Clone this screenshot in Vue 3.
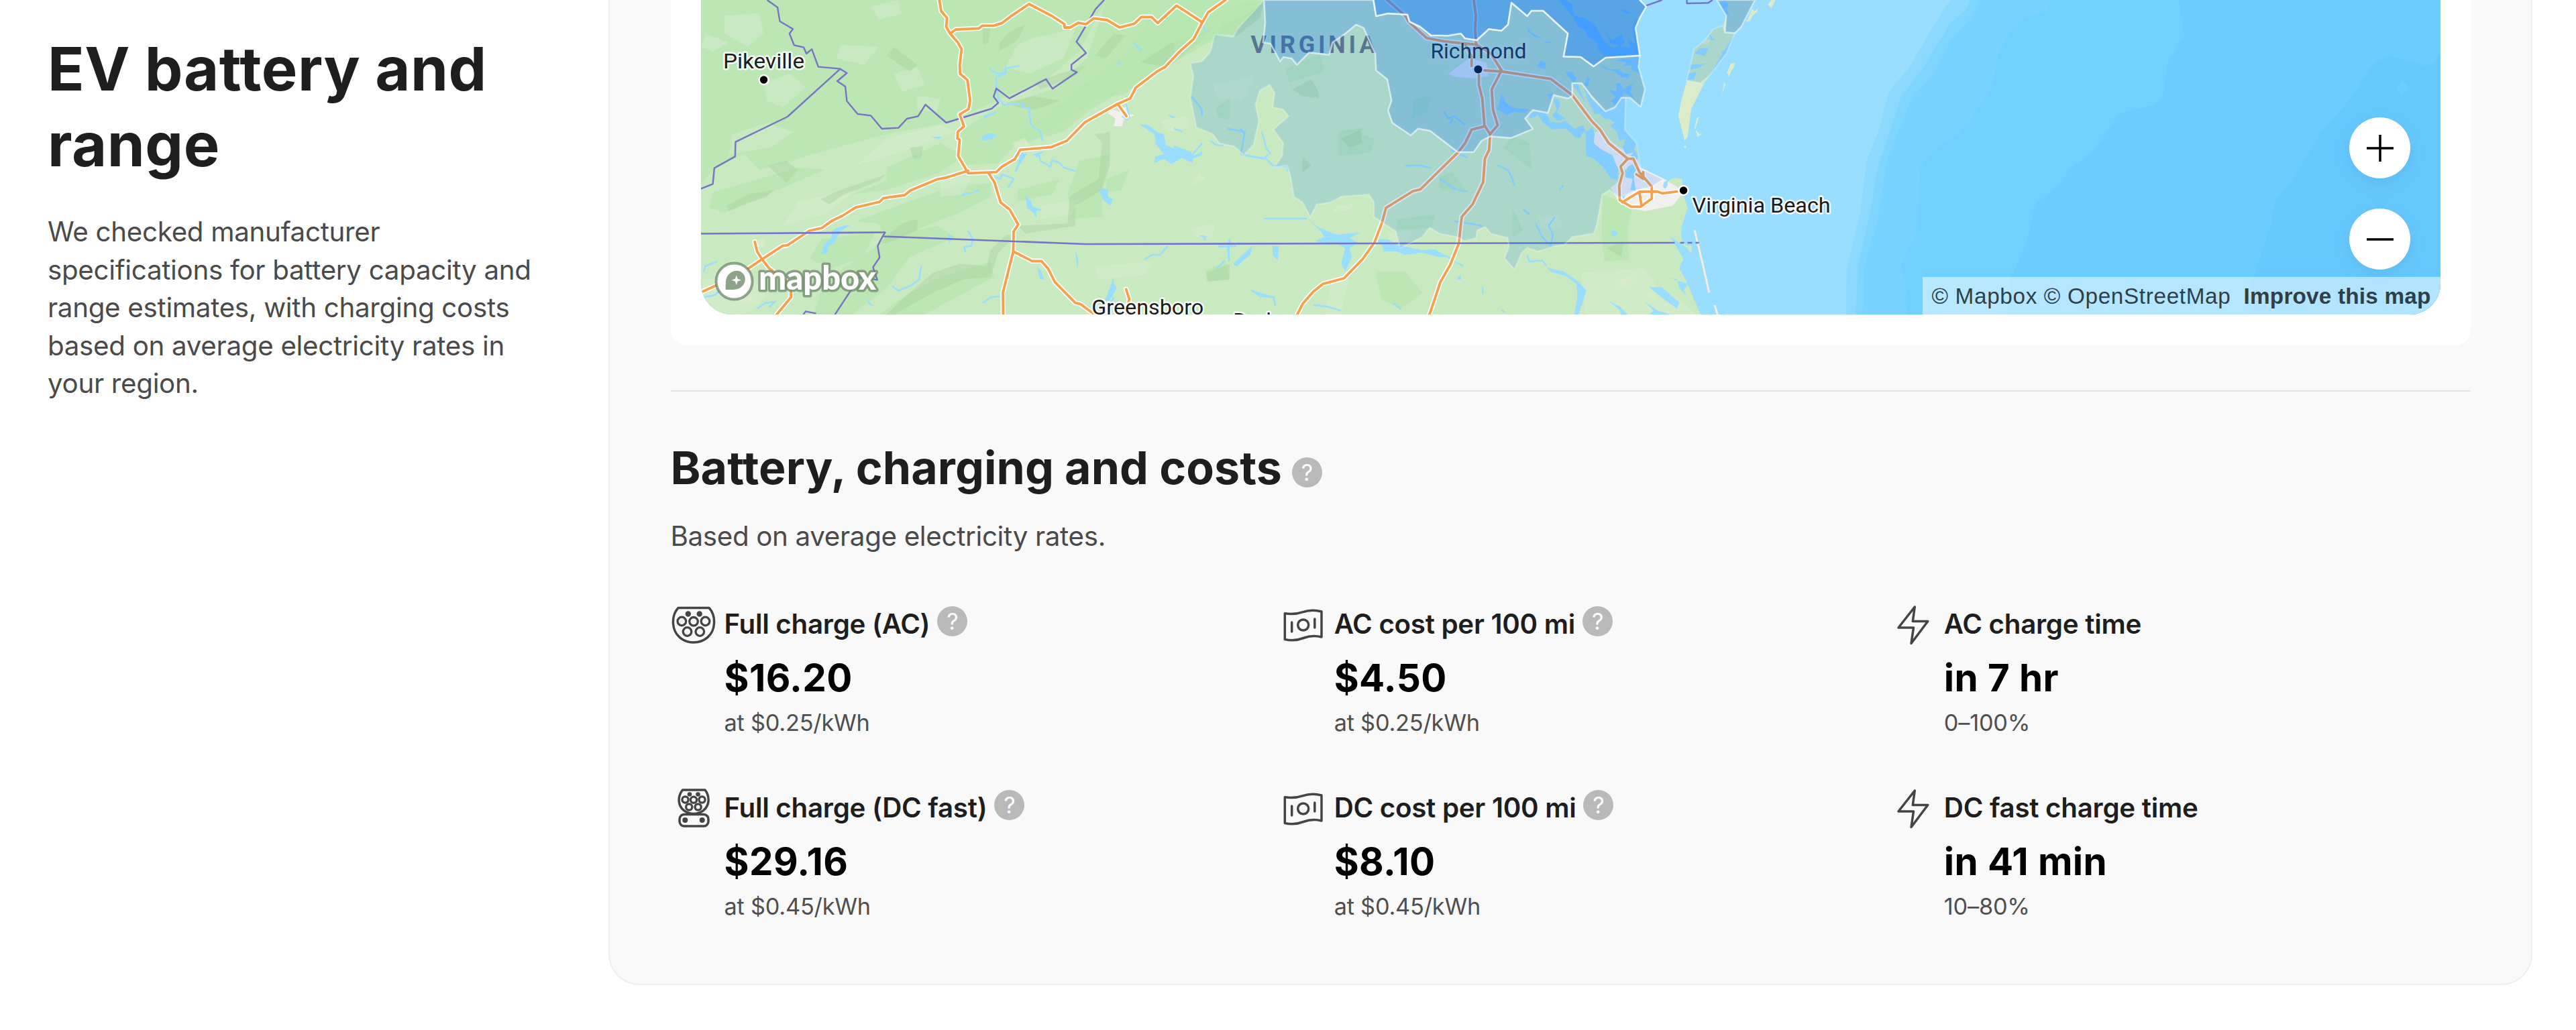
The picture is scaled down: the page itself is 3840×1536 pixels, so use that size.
<script setup>
const stats = [
    { icon: 'ac', label: 'Full charge (AC)', value: '$16.20', note: 'at $0.25/kWh', help: true },
    { icon: 'cash', label: 'AC cost per 100 mi', value: '$4.50', note: 'at $0.25/kWh', help: true },
    { icon: 'bolt', label: 'AC charge time', value: 'in 7 hr', note: '0–100%', help: false },
    { icon: 'dc', label: 'Full charge (DC fast)', value: '$29.16', note: 'at $0.45/kWh', help: true },
    { icon: 'cash', label: 'DC cost per 100 mi', value: '$8.10', note: 'at $0.45/kWh', help: true },
    { icon: 'bolt', label: 'DC fast charge time', value: 'in 41 min', note: '10–80%', help: false },
];

// ocean depth bands, shallow to deep
const depths = [
    { fill: '#8bd9ff', d: 'M285 0 270 35 200 255 160 340 150 400 140 480 113 605 100 800 72 1010 70 1190H1300V0Z' },
    { fill: '#80d5ff', d: 'M325 0 315 40 285 85 225 265 183 365 135 640 120 800 95 1000 90 1190H1300V0Z' },
    { fill: '#78d2ff', d: 'M345 0 325 70 285 150 250 280 205 370 155 600 135 830 108 1000 104 1190H1300V0Z' },
    { fill: '#70d0ff', d: 'M488 0 485 35 430 75 412 110 383 200 372 310 357 370 300 510 250 570 222 635 218 870 183 1000 196 1110 195 1190H1300V0Z' },
    { fill: '#6bccff', d: 'M752 0 764 135 730 235 718 375 700 397 632 427 578 572 530 635 510 695 458 770 440 920 405 1060 400 1190H1300V0Z' },
    { fill: '#65c9ff', d: 'M1289 200 1275 240 1255 247 1190 213 1165 225 1148 245 1108 365 1045 495 990 665 948 765 942 840 905 1050 890 1190H1300V200Z' },
    { fill: '#6bccff', d: 'M1210 302 1225 330 1210 360 1198 335Z' },
];

const westForest = [
    'M70 0H1130L1060 230 980 350 860 440 720 550 560 600 430 660 310 720 230 760 190 690 120 740 70 840Z',
    'M1130 0H1440L1390 170 1300 280 1180 400 1080 500 1020 590 900 640 850 730 760 740 740 600 850 480 990 400 1080 260Z',
    'M1250 70 1540 0 1530 60 1460 130 1360 200 1300 290 1220 360 1180 420 1110 440 1010 560 930 640 900 610 1000 480 1110 330 1190 220Z',
    'M560 750 700 640 760 700 700 770 560 850 470 870 560 810Z',
    'M110 860 230 800 330 750 400 760 330 810 250 870 140 950 100 930Z',
    'M480 990 620 900 740 830 830 820 830 880 740 960 690 990 560 1090 540 1000Z',
    'M560 1060 690 1010 740 1060 620 1150 560 1290 470 1407H370L400 1250 520 1120Z',
    'M1060 720 1140 690 1120 830 1120 970 1040 980 1030 870Z',
    'M1130 800 1190 760 1170 850 1130 860Z',
    'M700 1240 830 1170 840 1240 740 1330 660 1407H540L620 1310Z',
    'M900 850 1010 800 990 870 900 900Z',
    'M390 1070 530 1040 500 1150 420 1200 360 1160Z',
    'M1390 1210 1440 1170 1450 1250 1390 1260Z',
];

const westClearings = [
    'M140 70 230 60 240 150 200 210 140 150Z',
    'M240 370 310 330 350 390 290 480 250 450Z',
    'M520 30 590 0 600 60 540 90Z',
    'M940 170 1050 130 1020 260 930 330 870 300 900 200Z',
    'M440 200 540 210 500 290 430 260Z',
    'M580 330 640 300 660 380 600 410Z',
    'M160 600 250 550 320 590 260 660 150 690Z',
    'M640 430 700 440 690 500 640 490Z',
    'M90 150 150 190 110 230 80 210Z',
    'M560 620 700 560 740 590 600 680 480 740Z',
    'M700 800 780 790 760 870 700 880Z',
    'M80 1250 210 1230 250 1330 190 1407H130L80 1330Z',
    'M1370 770 1390 800 1350 830Z',
    'M1270 540 1340 520 1350 570 1290 590Z',
    'M330 900 480 850 400 960 290 1010Z',
    'M960 920 1060 890 1040 960 960 980Z',
    'M1100 1190 1250 1170 1230 1230 1110 1250Z',
];

const ridges = [
    'M145 920 200 870 265 850 250 880 200 910 150 945Z',
    'M390 890 440 850 560 780 540 810 450 870 410 915Z',
    'M620 660 655 655 650 710 630 710Z',
    'M855 190 880 140 920 110 900 180 850 230Z',
    'M810 120 830 110 825 190 810 200Z',
    'M945 370 1010 330 1080 290 1050 340 960 400Z',
    'M870 460 940 430 1010 450 950 490 900 480Z',
    'M1100 600 1140 590 1140 740 1120 850 1050 920 1050 1010 920 1045 900 1010 1030 1000 1035 880 1110 800 1120 640Z',
    'M680 1220 750 1180 820 1190 830 1120 870 1050 900 1050 850 1130 830 1240 760 1250 680 1310 580 1407H560L600 1340Z',
    'M600 1000 640 980 640 1030 560 1090 545 1080Z',
    'M1220 280 1290 200 1360 160 1420 100 1360 210 1290 300Z',
    'M580 210 640 290 620 320 560 250Z',
    'M250 740 300 720 330 760 300 820 270 770Z',
    'M1100 250 1150 150 1180 160 1130 260Z',
    'M1430 110 1500 60 1540 0 1530 80 1470 160 1420 150Z',
];

const westLakes = [
    'M1215 555 1240 560 1262 590 1280 600 1285 650 1310 665 1335 690 1325 700 1355 715 1355 730 1325 705 1300 735 1280 710 1255 730 1258 700 1280 690 1260 645 1255 600Z',
    'M1345 680 1360 695 1380 675 1378 695 1350 712Z',
    'M390 1138 398 1090 415 1070 420 1030 445 1010 465 1008 440 1035 425 1085 410 1100 405 1130Z',
    'M808 610 830 595 848 605 830 625 808 628Z',
    'M675 613 705 612 695 622Z',
    'M810 520 845 498 840 510 815 528Z',
    'M750 880 762 860 780 862 800 848 800 858 765 872Z',
    'M920 870 935 900 940 925 965 938 948 945 950 975 940 950 925 930Z',
    'M1120 840 1135 850 1135 880 1148 890 1140 920 1125 900 1112 855Z',
    'M1140 1285 1150 1240 1150 1270 1158 1290 1140 1345 1127 1345Z',
    'M1510 1100 1502 1140 1470 1190 1460 1185 1485 1140 1495 1130Z',
    'M1050 1115 1058 1165 1055 1205Z',
    'M1255 640 1262 640 1260 650Z',
    'M905 680 925 690 912 720 895 770 905 710Z',
    'M940 690 970 675 950 705Z',
    'M720 1045 722 1090 732 1060Z',
    'M950 1190 960 1210 970 1252 958 1248Z',
    'M508 1335 525 1368 515 1365Z',
    'M1290 510 1312 525 1300 528Z',
];

const westStreams = [
    'M828 305 845 330 870 325 868 305 905 295',
    'M870 328 845 345 845 395 850 440 865 470 880 465 915 465 915 480 930 485 935 560 960 590 965 630',
    'M955 690 960 720 985 745 990 715 1010 730 1020 750 1050 765',
    'M840 790 855 800 860 780 890 800 875 840',
    'M905 720 895 770',
    'M85 1215 90 1190 120 1170M85 1330 115 1320 125 1300',
    'M770 1030 785 1070 780 1100 762 1105 765 1130',
    'M575 1280 590 1300 620 1280 645 1250 650 1190',
    'M1230 1160 1250 1140 1270 1140 1290 1100',
    'M225 1380 245 1355 270 1350 255 1375',
    'M810 1355 830 1330 855 1325',
    'M1140 1365 1150 1330M1380 1055 1388 1075',
    'M1510 1300 1530 1325 1568 1330',
    'M1485 690 1505 700 1540 710 1550 690',
    'M1445 575 1490 590 1480 690M1355 690 1380 640',
    'M1420 1105 1455 1100 1450 1070M1445 1100 1450 1165',
    'M1200 190 1220 225M1160 290 1168 280',
    'M1172 520 1185 535 1190 520 1182 465',
];

const eastForest = [
    'M0 0H200L150 130 60 210 0 280Z',
    'M1000 870 1040 900 1070 940 1060 1010 1062 1160 1005 1170 1000 1070Z',
    'M470 1215 540 1215 580 1310 530 1380 485 1340Z',
    'M385 590 440 570 440 605 470 620 460 680 385 700Z',
    'M620 790 650 770 680 850 620 850Z',
    'M790 610 830 640 835 760 770 660Z',
    'M520 980 610 960 600 1020 520 1025Z',
    'M260 310 340 240 350 320 270 370Z',
    'M790 930 815 1030 790 1060Z',
    'M100 480 130 440 130 540 100 520Z',
    'M560 440 600 430 590 500 555 530Z',
];

const eastClearings = [
    'M90 380 190 340 160 450 100 440Z',
    'M40 1020 95 1000 90 1070 50 1060Z',
    'M380 920 420 910 410 940 370 950Z',
    'M370 1250 410 1240 390 1407H350Z',
    'M950 1220 1100 1200 1130 1290 1190 1350 1220 1407H960Z',
    'M850 970 900 960 910 1010 860 1025Z',
    'M500 1040 560 1030 540 1100 500 1110Z',
];

const eastLakes = [
    'M765 420 775 460 790 480 830 490 820 505 790 500 780 515 755 490Z',
    // lake gaston and kerr
    'M312 975 335 1015 365 1040 380 1050 435 1040 410 1065 430 1085 410 1110 415 1150 400 1215 390 1180 400 1110 380 1090 350 1095 330 1080 350 1060 345 1040Z',
    'M470 1070 500 1070 520 1095 580 1120 610 1115 630 1140 645 1150 620 1150 580 1130 540 1140 520 1125 490 1125 485 1095Z',
    'M230 1100 245 1100 242 1165 230 1140Z',
    'M183 1100 178 1140 145 1190 138 1180 160 1140Z',
    'M870 1197 910 1215 945 1260 963 1300 955 1350 945 1407H935L942 1330 940 1270 915 1235 880 1215Z',
    'M1110 1285 1140 1285 1160 1320 1180 1350 1175 1380 1145 1340Z',
    'M1160 1060 1200 1110 1210 1150 1200 1200 1215 1260 1240 1320 1250 1407H1230L1215 1340 1195 1250 1180 1200 1190 1160Z',
    'M1150 1240 1175 1250 1180 1290 1200 1330 1190 1300 1200 1270Z',
    'M1015 1345 1040 1370 1060 1407H1045L1040 1385Z',
    'M1100 1350 1130 1390 1160 1407H1110L1120 1390Z',
    'M0 650 40 680 45 720 20 705 0 725Z',
    'M1020 1035 1030 1030 1037 1050 1025 1060Z',
    'M668 1230 672 1250 660 1250Z',
];

// tidal rivers on the bay side
const tidewater = [
    'M370 0H400L425 15 440 70 490 80 530 110 550 145 580 195 610 215 640 205 690 215 680 175 710 200 700 120 715 80 730 150 735 248 580 257 545 220 540 190 500 165 480 130 455 120 435 75 415 55Z',
    'M580 140 605 180 650 155 665 190 640 205 600 195Z',
    'M630 35 690 55 680 65Z',
    'M270 505 310 500 335 545 370 550 400 540 440 575 480 560 490 590 520 570 530 600 525 640 555 665 610 695 635 760 630 805 605 800 560 740 520 705 492 700 490 600 480 590 465 618 445 615 400 575 340 578 300 550Z',
    'M235 510 280 495 270 520 240 530Z',
    'M345 440 370 445 375 475 360 500 400 530 365 540 340 520 360 490Z',
    'M428 374 455 375 480 440 490 460 445 400Z',
    'M475 375 520 450 575 498 620 480 650 440 667 440 665 580 715 645 705 670 725 700 715 720 690 700 705 680 670 690 655 660 670 620 640 630 630 590 600 560 620 550 590 530 570 530 555 510 530 510 500 450Z',
    'M545 285 600 310 640 310 660 330 690 330 680 350 650 345 620 320 580 310Z',
    'M620 270 735 252 722 300 740 345 715 320 690 310 700 295 660 295 670 280Z',
    'M590 400 630 410 625 375 645 370 655 400 700 375 690 410 705 440 660 415 650 440 625 480 605 450 625 435Z',
    'M400 320 425 320 450 350 435 370 405 335Z',
    'M500 340 508 350 500 385 480 385Z',
    'M275 290 290 270 310 280 310 310 275 300Z',
    'M230 120 245 145 295 172 260 165 230 140ZM300 188 335 185 330 195Z',
    'M315 425 345 415 330 445 325 435Z',
    'M665 770 680 745 700 735 715 750 705 800 715 855 690 850 700 800 670 795Z',
    'M840 815 860 805 855 830 845 845 835 835Z',
    'M650 880 670 870 660 890Z',
    'M1110 0 1130 20 1120 45 1135 70 1115 65 1085 10Z',
    'M950 290 1025 285 990 305 960 310ZM1040 150 1070 180 1050 180ZM1000 215 1040 215 1020 250 975 240ZM945 330 985 320 975 355 945 358ZM1095 235 1118 220 1105 245Z',
];

const eastStreams = [
    'M540 742 575 740 600 752M645 670 685 705',
    'M620 800 660 850M665 852 685 855',
    'M755 740 780 760 790 800 795 830',
    'M815 935 830 960M845 1000 860 1060 880 1100 885 1050 875 1010 890 970',
    'M180 1300 210 1320 232 1330 237 1370',
    'M325 1365 355 1370 390 1390',
    'M720 1285 722 1315M512 1355 530 1385',
    'M825 1140 830 1170 860 1165 870 1190',
    'M210 978 310 978',
    'M128 1070 128 1170M105 1105 145 1100',
    'M100 1200 118 1165M60 1055 75 1060',
    'M630 500 640 530 655 520 680 560M650 530 645 555',
    'M0 575 20 590M40 430 65 490 65 520',
    'M85 630 100 650 115 650M155 575 165 600M205 590 215 660 225 690',
    'M155 690 215 710 230 740 265 745 265 770',
    'M655 990 690 1000 720 1010M765 1385 770 1395',
    'M910 830 900 850',
    'M65 100 75 145',
    'M655 1170 675 1190M640 1150 650 1165',
];

const westRoads = [
    'M697 0 702 50 717 80 715 120 725 150 745 190 755 220 750 290 751 330 770 358 777 450 773 488 750 512 761 565 745 590 744 620 750 625 746 698 772 775 845 770 860 745 893 712 907 670 988 658 1028 630 1075 547 1160 465 1193 440 1207 392 1262 320 1283 300 1320 232 1357 175 1380 100 1395 55 1440 0',
    'M725 150 740 132 800 127 808 115 838 115 860 103 885 70 930 18 990 72 1022 108 1022 123 1037 123 1058 102 1078 108 1098 82 1133 90 1165 123 1203 106 1222 76 1248 76 1264 103 1313 25 1380 100',
    'M78 1308 170 1237 237 1160 290 1100 303 1097 360 1032 392 1020 418 988 445 966 480 928 542 903 552 886 607 873 622 852 690 803 716 794 772 764',
    'M825 775 840 815 856 905 880 938 902 1005 890 1035 889 1125 862 1310 863 1410',
    'M889 1125 938 1168 962 1168 980 1203 997 1262 1050 1355 1063 1360 1100 1407',
    'M218 1082 224 1125 237 1160 255 1200 298 1255 312 1290 312 1330 275 1407',
    'M1160 465 1183 520',
    'M1182 1294 1190 1337 1183 1407',
];

const eastRoads = [
    'M498 0 540 70 548 97 590 170 630 185 680 195 707 200 740 240 765 315',
    'M700 0 705 70 703 130 706 205',
    'M680 200 695 250 695 295M725 315 765 320 880 353 930 425 975 540 995 580 1015 640 1060 710 1043 745 1048 775 1040 830 1041 895 1068 925 1090 925 1116 888 1116 835 1087 770 1073 710 1060 710',
    'M765 315 742 400 745 490 756 560 738 600 725 560 720 440 712 380 712 335',
    'M725 565 695 580 680 640 663 682 575 848 558 855 495 930 485 1000 468 1085 440 1160 397 1245 348 1270 325 1305 300 1360 287 1410',
    'M738 605 736 670 726 710 722 815 697 915 672 970 665 1090 645 1185 622 1262 612 1320 596 1410',
    'M1047 905 1087 858 1130 857 1140 865 1175 857M1087 860 1092 920M1080 780 1096 800 1096 770',
];

const borders = [
    { from: 'west', d: 'M250 0 277 33 283 95 317 130 308 150 320 202 345 212 352 240 366 220 383 299 440 308 303 522 168 635 167 700 113 752 109 823 70 850' },
    { from: 'west', d: 'M440 308 457 327 432 363 453 387 457 452 485 510 519 517 548 576 591 572 613 531 642 520 661 468 715 549 833 486 850 460 838 432 845 396 879 440 974 354 991 397 1054 323 1040 312 1040 290 1078 237 1053 187 1103 40 1125 0' },
    { from: 'west', d: 'M557 1038 550 1057 537 1100 542 1152 525 1195 536 1252 490 1240 425 1410M343 1410 350 1393 377 1402' },
    { from: 'east', d: 'M1103 25 1140 0M1198 0 1198 15 1248 13 1258 0' },
];

const lightZones = [
    'M210 0 150 125 138 165 95 155 85 230 65 275 38 283 45 340 38 440 52 570 90 600 105 640 140 655 163 693 185 650 198 540 190 470 200 405 223 380 235 415 230 480 255 490 267 520 232 580 255 640 252 700 235 745 265 740 272 790 280 880 300 905 318 970 333 915 365 905 390 880 455 870 467 905 467 970 490 1000 518 1035 528 1110 580 1060 597 1018 620 1045 660 1060 680 1078 705 1065 708 1030 727 1015 740 1045 780 1065 782 1105 772 1155 795 1205 812 1130 825 1108 850 1125 890 1100 912 1095 930 1060 980 1045 988 1000 1000 870 1018 850 1040 885 1080 850 1116 835 1142 802 1090 755 1080 640 1053 580 1055 437 1045 437 1030 480 1008 498 975 430 952 372 930 372 930 430 920 440 887 425 873 505 838 492 820 530 838 577 787 617 738 610 718 630 700 680 663 680 598 585 570 575 553 605 510 550 500 495 508 450 498 355 472 315 470 240 443 125 425 110 400 150 370 190 362 245 315 235 287 290 275 262 255 255 248 275 225 195 208 190 213 100Z',
    'M1282 115 1260 130 1240 180 1215 220 1198 360 1230 372 1250 340 1290 240 1310 148 1287 145Z',
];

const darkZones = [
    'M210 0 213 100 208 190 225 195 248 275 255 255 275 262 287 290 315 235 362 245 370 190 400 150 425 110 443 125 470 240 472 315 498 355 508 450 500 495 510 550 553 605 570 575 598 585 663 680 700 680 718 630 738 610 787 617 838 577 820 530 838 492 873 505 887 425 920 440 930 430 930 372 952 372 975 430 1008 498 1030 480 1045 437 1065 437 1090 478 1100 400 1085 300 1088 248 1008 258 980 297 950 255 910 253 920 150 862 48 835 48 825 72 788 12 780 110 765 137 735 130 707 180 680 172 670 150 600 158 575 120 550 97 545 65 500 60 472 72 465 0Z',
    'M1268 0 1290 70 1287 145 1310 148 1325 120 1357 0Z',
];

const blueZone = 'M465 -10 472 72 500 60 545 65 550 97 575 120 600 158 640 160 670 150 680 172 707 180 735 130 765 137 780 110 788 12 825 72 835 48 862 48 920 150 910 253 950 255 980 297 1008 258 1088 248 1078 125 1088 80 1103 30 1083 -10Z';

const islets = [
    'M1198 360 1185 450 1178 520 1193 630 1200 610 1208 490 1238 375Z',
    'M1190 660 1194 650 1198 662Z',
    'M1340 90 1350 40 1356 50 1345 95Z',
    'M1395 0 1405 0 1395 38 1388 20Z',
    'M1300 285 1310 280 1296 345 1292 325Z',
    'M1285 370 1288 375 1280 425Z',
    'M1215 580 1222 525 1226 525 1218 575Z',
];
</script>

<template>
    <div class="page">
        <aside class="intro">
            <h1>EV battery and range</h1>
            <p>We checked manufacturer specifications for battery capacity and range estimates, with charging costs based on average electricity rates in your region.</p>
        </aside>

        <main class="panel">
            <section class="map-card">
                <div class="map">
                    <svg class="map-canvas" viewBox="1045 0 2592 469" preserveAspectRatio="none">
                        <rect x="1045" width="2592" height="469" fill="#99ddff" />
                        <g transform="translate(2700 0) scale(.72707 .39542)">
                            <path v-for="band in depths" :key="band.d" :d="band.d" :fill="band.fill" />
                        </g>
                        <g transform="translate(1750 0) scale(.63776 .33333)">
                            <path class="land" d="M-1150 0H1083L1103 30 1088 80 1078 125 1088 250 1085 300 1100 400 1090 478 1065 437 1055 437 1053 580 1080 650 1090 760 1140 800 1137 830 1150 830 1158 805 1170 795 1187 800 1187 860 1200 930 1185 1020 1185 1070 1195 1095 1210 1100 1208 1130 1190 1110 1200 1200 1225 1300 1240 1410H-1150Z" />
                            <path class="land" d="M1268 0H1357L1325 120 1310 148 1250 340 1238 375 1198 360 1215 220 1240 180 1260 130 1282 115 1290 70Z" />
                            <path v-for="d in islets" :key="d" class="sand" :d="d" />
                            <path class="spit" d="M1216 1030 1235 1180 1250 1310M1263 1365 1270 1410" />
                        </g>

                        <g transform="translate(1000 0) scale(.57398 .33333)">
                            <path v-for="d in westForest" :key="d" class="forest" :d="d" />
                            <path v-for="d in westClearings" :key="d" class="clearing" :d="d" />
                            <path v-for="d in ridges" :key="d" class="ridge" :d="d" />
                            <path class="town" d="M1133 505 1150 490 1165 500 1183 475 1190 510 1205 515 1175 535 1172 565 1150 565 1155 530Z" />
                            <path class="sand" opacity=".6" d="M885 640 920 615 930 650 900 670ZM210 1075 245 1070 245 1105 220 1110ZM170 1330 210 1325 225 1350 190 1360Z" />
                            <path v-for="d in westLakes" :key="d" class="water" :d="d" />
                            <path v-for="d in westStreams" :key="d" class="stream" :d="d" />
                        </g>
                        <g transform="translate(1750 0) scale(.63776 .33333)">
                            <path v-for="d in eastForest" :key="d" class="forest" :d="d" />
                            <path v-for="d in eastClearings" :key="d" class="clearing" :d="d" />
                            <path class="ridge" opacity=".6" d="M275 400 320 355 335 400 340 440 300 430ZM390 620 435 580 440 640 410 660ZM75 1220 130 1180 130 1250 80 1260ZM1010 1110 1050 1080 1045 1150ZM300 700 320 740 300 770Z" />
                            <path class="town" d="M640 330 690 260 730 280 735 340 700 350 660 345ZM1035 890 1020 840 1045 800 1090 750 1145 800 1170 830 1190 860 1165 920 1100 945 1055 925ZM970 590 995 590 1040 660 1080 690 1090 750 1045 760 1020 720 985 650Z" />
                            <path class="sand" opacity=".7" d="M1040 1250 1085 1230 1060 1280 1040 1285ZM1100 1320 1120 1310 1130 1350Z" />
                            <path v-for="d in eastLakes" :key="d" class="water" :d="d" />
                            <path v-for="d in eastStreams" :key="d" class="stream" :d="d" />
                        </g>
                        <g transform="translate(2200 0) scale(.33333)">
                            <path v-for="d in tidewater" :key="d" class="water" :d="d" />
                            <path class="sand" d="M1228 65 1262 35 1255 55 1235 70ZM1310 15 1335 5 1325 25ZM1205 90 1225 88 1215 98ZM1120 325 1160 283 1150 305 1125 332ZM1030 175 1048 178 1035 200 1010 195ZM980 580 990 612 1015 595 1000 600Z" />
                        </g>

                        <path
                            v-for="line in borders"
                            :key="line.d"
                            class="border"
                            :transform="line.from === 'west' ? 'translate(1000 0) scale(.57398 .33333)' : 'translate(1750 0) scale(.63776 .33333)'"
                            :d="line.d"
                        />

                        <g transform="translate(1000 0) scale(.57398 .33333)">
                            <path v-for="d in westRoads" :key="d" class="road-case" :d="d" />
                            <path v-for="d in westRoads" :key="d" class="road" :d="d" />
                        </g>
                        <g transform="translate(1750 0) scale(.63776 .33333)">
                            <path v-for="d in eastRoads" :key="d" class="road-case" :d="d" />
                            <path v-for="d in eastRoads" :key="d" class="road" :d="d" />
                        </g>
                        <path class="state-line" d="M1045 348.5 1320 346.5M1316 352.5 1618 364 2496 362M2504 362H2510M2515 362H2522M2527 362H2532" />

                        <text class="state-name" x="1864" y="79" textLength="186">VIRGINIA</text>
                        <text class="city plain" x="2132" y="87.5" textLength="143" lengthAdjust="spacingAndGlyphs">Richmond</text>
                        <circle cx="2203" cy="103.5" r="6" fill="#000" />

                        <g transform="translate(1750 0) scale(.63776 .33333)">
                            <path v-for="d in lightZones" :key="d" class="zone zone-light" :d="d" />
                            <path v-for="d in darkZones" :key="d" class="zone zone-mid" :d="d" />
                            <path class="zone zone-strong" :d="blueZone" />
                        </g>

                        <circle class="dot" cx="1138.5" cy="119" r="7" />
                        <circle class="dot" cx="2509" cy="284" r="7" />
                        <text class="city" x="1078" y="102.5" textLength="121" lengthAdjust="spacingAndGlyphs">Pikeville</text>
                        <text class="city" x="2522" y="317" textLength="206" lengthAdjust="spacingAndGlyphs">Virginia Beach</text>
                        <text class="city" x="1627" y="469" textLength="167" lengthAdjust="spacingAndGlyphs">Greensboro</text>
                        <text class="city" x="1838" y="489" textLength="112" lengthAdjust="spacingAndGlyphs">Durham</text>

                        <g class="brand">
                            <circle cx="1094.5" cy="419.5" r="27" />
                            <path class="brand-pin" d="M1081.7 432C1081.7 421 1081 414 1087.5 408 1094 402 1103 402.5 1107.5 408 1113 414 1111 422 1106.5 426.5 1100 433 1092 432 1081.7 432Z" />
                            <path class="brand-star" d="M1097.7 410.5 1099.6 415.8 1105 417.7 1099.6 419.6 1097.7 425 1095.8 419.6 1090.4 417.7 1095.8 415.8Z" />
                            <text x="1131" y="432.5" textLength="175" lengthAdjust="spacingAndGlyphs">mapbox</text>
                        </g>
                    </svg>

                    <div class="zoom">
                        <button type="button" aria-label="Zoom in">
                            <svg viewBox="0 0 42 42"><path d="M21 1V41M1 21H41" /></svg>
                        </button>
                        <button type="button" aria-label="Zoom out">
                            <svg viewBox="0 0 42 42"><path d="M1 21H41" /></svg>
                        </button>
                    </div>
                    <div class="attribution">
                        <span>© Mapbox © OpenStreetMap</span>
                        <strong>Improve this map</strong>
                    </div>
                </div>
            </section>

            <hr class="divider">

            <section class="costs">
                <h2>Battery, charging and costs<span class="help">?</span></h2>
                <p class="costs-note">Based on average electricity rates.</p>
                <div class="stats">
                    <article v-for="stat in stats" :key="stat.label" class="stat">
                        <svg v-if="stat.icon === 'ac'" class="icon" viewBox="0 0 68 68">
                            <path d="M11 8.5H57C63 15 65 24 64.5 32 63.5 49 50 60 34 60S4.5 49 3.5 32C3 24 5 15 11 8.5Z" />
                            <g class="pins"><circle cx="16.3" cy="28.5" r="6.3" /><circle cx="34" cy="28.8" r="6.3" /><circle cx="51.5" cy="28.5" r="6.3" /><circle cx="24.5" cy="44" r="6.3" /><circle cx="43.3" cy="44" r="6.3" /></g>
                            <circle class="solid" cx="25.8" cy="17.5" r="4.2" /><circle class="solid" cx="42.7" cy="17.5" r="4.2" />
                        </svg>
                        <svg v-else-if="stat.icon === 'dc'" class="icon" viewBox="0 0 68 68">
                            <path d="M17.5 6H51C55 11 56.5 17 56 23 55 34 45 41.5 34 41.5S13 34 12.2 23C11.7 17 13.5 11 17.5 6Z" />
                            <rect x="13" y="42.5" width="43" height="17.5" rx="7" />
                            <g class="pins"><circle cx="21.5" cy="20.5" r="4.6" /><circle cx="34" cy="20.8" r="4.6" /><circle cx="46.5" cy="20.5" r="4.6" /><circle cx="27.2" cy="31.5" r="4.6" /><circle cx="40.6" cy="31.5" r="4.6" /></g>
                            <circle class="solid" cx="28" cy="12.5" r="3.3" /><circle class="solid" cx="40.5" cy="12.5" r="3.3" />
                            <circle class="solid" cx="21.3" cy="51" r="4" /><circle class="solid" cx="46.7" cy="51" r="4" />
                        </svg>
                        <svg v-else-if="stat.icon === 'cash'" class="icon" viewBox="0 0 68 68">
                            <path d="M6.3 16.8C15 18.3 23 18 32.5 14.8 42 11.5 52 11.5 61 14V52C52 49.5 43 50 34 53.5 25 57 15 57.5 6.3 55.5Z" />
                            <circle cx="33.7" cy="34" r="8" />
                            <path d="M16.7 30V44M50.8 25V38" />
                        </svg>
                        <svg v-else class="icon" viewBox="0 0 68 68">
                            <path d="M36.3 7 12 38H34.5L31 61.5 55.8 28.5H33.3Z" />
                        </svg>
                        <div class="stat-body">
                            <h3>{{ stat.label }}<span v-if="stat.help" class="help">?</span></h3>
                            <p class="value">{{ stat.value }}</p>
                            <p class="note">{{ stat.note }}</p>
                        </div>
                    </article>
                </div>
            </section>
        </main>
    </div>
</template>

<style>
body{margin:0;background:#fff}
</style>

<style scoped>
.page{box-sizing:border-box;display:flex;width:3840px;height:1536px;padding:0 65px 0 71px;overflow:hidden;background:#fff;color:#1e1e1e;font-family:Inter,"Liberation Sans",sans-serif}
h1,h2,h3,p{margin:0}
.intro{flex:none;width:760px;margin-right:76px;padding-top:46px}
.intro h1{font-size:90px;font-weight:700;line-height:113px;letter-spacing:.55px}
.intro p{margin-top:46px;color:#4a4a4a;font-size:40.3px;line-height:56.5px;letter-spacing:-.3px}
.panel{box-sizing:border-box;flex:1;height:1469px;padding:0 90.5px;border:2px solid #eee;border-top:0;border-radius:0 0 46px 46px;background:#f9f9f9}
.map-card{padding:0 45px 46px;border-radius:0 0 24px 24px;background:#fff}
.map{position:relative;height:469px;overflow:hidden;border-radius:0 0 46px 46px}
.map-canvas{display:block;width:100%;height:469px}
.land{fill:#c9eac1}
.sand{fill:#dcebc9}
.town{fill:#f2f0ef}
.spit{fill:none;stroke:#f5ecdf;stroke-width:3;vector-effect:non-scaling-stroke}
.forest{fill:#b6e5af;opacity:.7}
.clearing{fill:#d3ebcc;opacity:.55}
.ridge{fill:#a3cc98;opacity:.36}
.water{fill:#99ddff}
.stream{fill:none;stroke:#99ddff;stroke-width:2.5;vector-effect:non-scaling-stroke}
.border{fill:none;stroke:#7574c6;stroke-width:2.4;stroke-linejoin:round;vector-effect:non-scaling-stroke}
.state-line{fill:none;stroke:#7574c6;stroke-width:2.6}
.road-case,.road{fill:none;stroke-linejoin:round;stroke-linecap:round;vector-effect:non-scaling-stroke}
.road-case{stroke:#fff;stroke-width:7.5;opacity:.9}
.road{stroke:#f7a04c;stroke-width:3.8}
.zone{stroke:#fff;stroke-opacity:.5;stroke-width:2.5;stroke-linejoin:round;vector-effect:non-scaling-stroke}
.zone-light{fill:rgba(0,108,255,.15);stroke-opacity:.25}
.zone-mid{fill:rgba(0,108,255,.34)}
.zone-strong{fill:rgba(0,108,255,.56);stroke-opacity:.8}
.state-name{fill:#68777f;font:700 36px Roboto,sans-serif}
.city{fill:#1c1c1c;stroke:#fff;stroke-width:5px;stroke-linejoin:round;stroke-opacity:.85;paint-order:stroke;font:400 32px Roboto,sans-serif}
.city.plain{stroke-opacity:.2}
.dot{fill:#000;stroke:#fff;stroke-width:2.5}
.brand circle{fill:#fff;fill-opacity:.95;stroke:#5d765c;stroke-opacity:.65;stroke-width:4}
.brand-pin{fill:#8ca388}
.brand-star{fill:#fff}
.brand text{fill:#fff;stroke:#748d72;stroke-opacity:.8;stroke-width:7px;stroke-linejoin:round;paint-order:stroke;font:900 49px Lato,sans-serif}
.zoom{position:absolute;top:175px;right:44.5px;display:flex;flex-direction:column;gap:45px}
.zoom button{display:flex;align-items:center;justify-content:center;width:91px;height:91px;padding:0;border:0;border-radius:50%;background:#fff;box-shadow:0 8px 32px rgba(0,0,0,.08)}
.zoom svg{width:42px;height:42px;fill:none;stroke:#000;stroke-width:3.5}
.attribution{position:absolute;right:0;bottom:0;box-sizing:border-box;display:flex;align-items:center;justify-content:space-between;width:772px;height:56.5px;padding:2px 14px 0;background:rgba(255,255,255,.5);color:#2e3f4a;font-family:"Liberation Sans",sans-serif;font-size:33.3px;letter-spacing:.65px;white-space:nowrap}
.attribution strong{letter-spacing:.2px}
.divider{height:2px;margin:67px 0 0;border:0;background:#e5e5e5}
.costs{padding-top:68px}
.costs h2{display:flex;align-items:center;font-size:68px;font-weight:700;line-height:90px;letter-spacing:.08px}
.costs-note{margin-top:30px;color:#4a4a4a;font-size:40.3px;line-height:56.5px;letter-spacing:-.33px}
.help{display:inline-flex;flex:none;align-items:center;justify-content:center;width:45px;height:45px;border-radius:50%;background:#b9b9b9;color:#fff;font-size:34px;font-weight:400;line-height:45px}
h2 .help{margin:14px 0 0 15px}
.stats{display:grid;grid-template-columns:repeat(3,1fr);gap:75.5px 44.5px;margin-top:74px}
.stat{display:flex;gap:12px}
.icon{flex:none;width:68px;height:68px;margin-top:-5px;fill:none;stroke:#444;stroke-width:3.5;stroke-linejoin:round;stroke-linecap:round}
.pins{stroke-width:3.3}
.solid{fill:#444;stroke:none}
.stat h3{display:flex;align-items:center;font-size:40.3px;font-weight:600;line-height:56.5px;letter-spacing:-.28px;white-space:nowrap}
h3 .help{margin:-9px 0 0 11px}
.value{margin-top:17px;color:#000;font-size:56.5px;font-weight:700;line-height:70px;letter-spacing:.4px}
.note{margin-top:9px;color:#4f4f4f;font-size:34.3px;line-height:46px;letter-spacing:-.22px}
</style>
